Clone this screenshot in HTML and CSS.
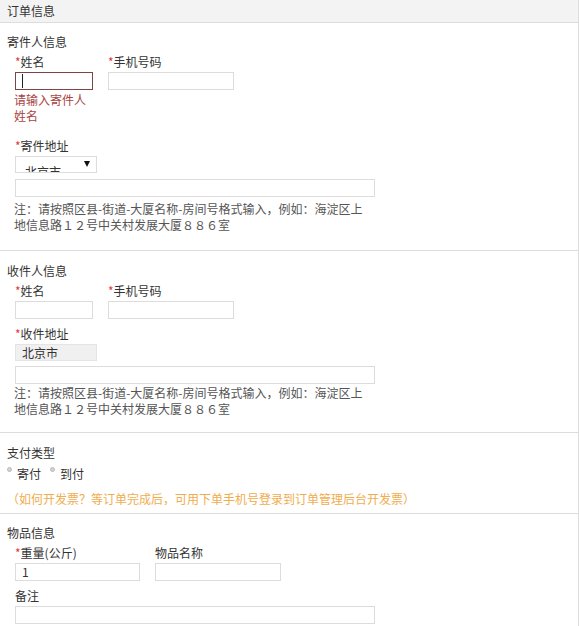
FILE: index.html
```html
<!DOCTYPE html>
<html lang="zh-CN">
<head>
    <meta charset="UTF-8">
    <meta name="viewport" content="width=device-width, initial-scale=1.0">
    <title>订单信息</title>
    <link rel="stylesheet" href="styles.css">
</head>
<body>
    <div class="panel">
        <div class="panel-head">订单信息</div>

        <div class="section section-sender">
            <div class="section-title">寄件人信息</div>
            <div class="row">
                <div class="field col-name">
                    <div class="label"><span class="req">*</span>姓名</div>
                    <div class="input has-error"><span class="caret"></span></div>
                    <div class="error">请输入寄件人姓名</div>
                </div>
                <div class="field col-phone">
                    <div class="label"><span class="req">*</span>手机号码</div>
                    <div class="input"></div>
                </div>
            </div>
            <div class="field">
                <div class="label"><span class="req">*</span>寄件地址</div>
                <div class="select">
                    <span class="select-text">北京市</span>
                    <span class="select-arrow"></span>
                </div>
                <div class="input input-wide addr"></div>
                <div class="note">注：请按照区县-街道-大厦名称-房间号格式输入，例如：海淀区上地信息路１２号中关村发展大厦８８６室</div>
            </div>
        </div>

        <div class="section section-receiver">
            <div class="section-title">收件人信息</div>
            <div class="row">
                <div class="field col-name">
                    <div class="label"><span class="req">*</span>姓名</div>
                    <div class="input"></div>
                </div>
                <div class="field col-phone">
                    <div class="label"><span class="req">*</span>手机号码</div>
                    <div class="input"></div>
                </div>
            </div>
            <div class="field">
                <div class="label"><span class="req">*</span>收件地址</div>
                <div class="city">北京市</div>
                <div class="input input-wide addr-near"></div>
                <div class="note note-tight">注：请按照区县-街道-大厦名称-房间号格式输入，例如：海淀区上地信息路１２号中关村发展大厦８８６室</div>
            </div>
        </div>

        <div class="section section-pay">
            <div class="section-title">支付类型</div>
            <div class="radios">
                <label class="radio"><span class="dot"></span>寄付</label>
                <label class="radio"><span class="dot"></span>到付</label>
            </div>
            <div class="tip">（如何开发票？等订单完成后，可用下单手机号登录到订单管理后台开发票）</div>
        </div>

        <div class="section section-goods">
            <div class="section-title">物品信息</div>
            <div class="row">
                <div class="field col-weight">
                    <div class="label"><span class="req">*</span>重量(公斤)</div>
                    <div class="input">1</div>
                </div>
                <div class="field col-phone">
                    <div class="label">物品名称</div>
                    <div class="input"></div>
                </div>
            </div>
            <div class="field">
                <div class="label">备注</div>
                <div class="input input-wide"></div>
            </div>
        </div>
    </div>
</body>
</html>
```

FILE: styles.css
```css
:root {
    --text-color: #333333;
    --border-color: #dddddd;
    --input-border: #dcdcdc;
    --head-background: #f3f3f3;
    --error-color: #a94442;
    --required-color: #e4393c;
    --tip-color: #f0ad4e;
}

body {
    margin: 0;
    font-family: "Noto Sans CJK SC", "Microsoft YaHei", sans-serif;
    font-size: 12px;
    line-height: 16px;
    color: var(--text-color);
    background: #ffffff;
}

.panel {
    width: 578px;
    min-height: 626px;
    border-right: 1px solid var(--border-color);
}

.panel-head {
    background: var(--head-background);
    border-bottom: 1px solid var(--border-color);
    padding: 3px 7px;
}

.section {
    padding: 11px 7px 17px;
    border-bottom: 1px solid var(--border-color);
}

.section-receiver {
    padding-top: 12px;
    padding-bottom: 15px;
}

.section-pay {
    padding-top: 12px;
    padding-bottom: 6px;
}

.section-goods {
    padding-bottom: 0;
    border-bottom: none;
}

.section-title {
    margin-bottom: 4px;
}

.row {
    display: flex;
    gap: 15px;
    margin-bottom: 7px;
}

.field {
    padding-left: 8px;
}

.row .field + .field {
    padding-left: 0;
}

.col-name {
    width: 78px;
}

.col-phone {
    width: 126px;
}

.col-weight {
    width: 125px;
}

.label {
    margin-bottom: 2px;
}

.req {
    color: var(--required-color);
}

.input {
    box-sizing: border-box;
    height: 18px;
    border: 1px solid var(--input-border);
    padding: 0 6px;
    line-height: 16px;
    background: #ffffff;
}

.input.has-error {
    border-color: #7d4545;
    padding-left: 6px;
}

.caret {
    display: block;
    width: 1px;
    height: 14px;
    margin-top: 1px;
    background: #222222;
}

.input-wide {
    width: 360px;
}

.error {
    color: var(--error-color);
    margin-top: 2px;
    margin-bottom: 7px;
    margin-left: -1px;
}

.select {
    box-sizing: border-box;
    width: 82px;
    height: 17px;
    border: 1px solid var(--input-border);
    overflow: hidden;
    display: flex;
    justify-content: space-between;
    align-items: flex-start;
    padding: 0 6px 0 9px;
}

.select-text {
    margin-top: 7px;
}

.select-arrow {
    margin-top: 4px;
    width: 0;
    height: 0;
    border-left: 3px solid transparent;
    border-right: 3px solid transparent;
    border-top: 6px solid #111111;
}

.city {
    box-sizing: border-box;
    width: 82px;
    height: 17px;
    line-height: 15px;
    padding-left: 6px;
    background: #f0f0f0;
    border: 1px solid #e4e4e4;
}

.addr {
    margin-top: 6px;
}

.addr-near {
    margin-top: 5px;
}

.note {
    width: 356px;
    margin-top: 4px;
    margin-left: -1px;
    color: #555555;
}

.note-tight {
    margin-top: 1px;
}

.radios {
    display: flex;
    gap: 9px;
    margin-top: 5px;
}

.radio {
    display: flex;
    align-items: flex-start;
    gap: 5px;
}

.dot {
    box-sizing: border-box;
    width: 5px;
    height: 5px;
    margin-top: 1px;
    border-radius: 50%;
    background: #d4d4d4;
    border: 1px solid #b8b8b8;
}

.tip {
    color: var(--tip-color);
    margin-top: 9px;
}
```
